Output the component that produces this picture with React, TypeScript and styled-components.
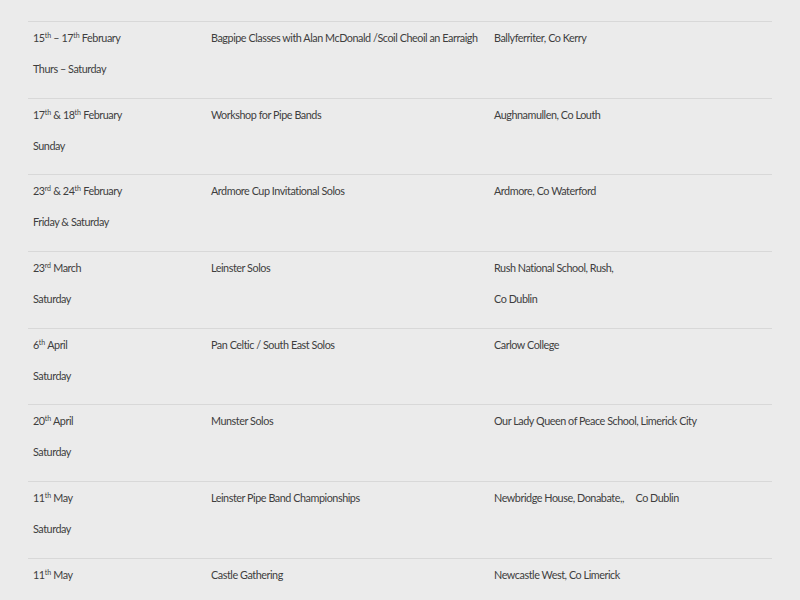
import React from "react";
import styled, { createGlobalStyle } from "styled-components";

type Event = {
  day: React.ReactNode;
  when: string;
  title: string;
  place: string[];
};

const events: Event[] = [
  {
    day: (
      <>
        15<sup>th</sup> – 17<sup>th</sup> February
      </>
    ),
    when: "Thurs – Saturday",
    title: "Bagpipe Classes with Alan McDonald /Scoil Cheoil an Earraigh",
    place: ["Ballyferriter, Co Kerry"],
  },
  {
    day: (
      <>
        17<sup>th</sup> &amp; 18<sup>th</sup> February
      </>
    ),
    when: "Sunday",
    title: "Workshop for Pipe Bands",
    place: ["Aughnamullen, Co Louth"],
  },
  {
    day: (
      <>
        23<sup>rd</sup> &amp; 24<sup>th</sup> February
      </>
    ),
    when: "Friday & Saturday",
    title: "Ardmore Cup Invitational Solos",
    place: ["Ardmore, Co Waterford"],
  },
  {
    day: (
      <>
        23<sup>rd</sup> March
      </>
    ),
    when: "Saturday",
    title: "Leinster Solos",
    place: ["Rush National School, Rush,", "Co Dublin"],
  },
  {
    day: (
      <>
        6<sup>th</sup> April
      </>
    ),
    when: "Saturday",
    title: "Pan Celtic / South East Solos",
    place: ["Carlow College"],
  },
  {
    day: (
      <>
        20<sup>th</sup> April
      </>
    ),
    when: "Saturday",
    title: "Munster Solos",
    place: ["Our Lady Queen of Peace School, Limerick City"],
  },
  {
    day: (
      <>
        11<sup>th</sup> May
      </>
    ),
    when: "Saturday",
    title: "Leinster Pipe Band Championships",
    place: ["Newbridge House, Donabate,,\u00a0\u00a0\u00a0\u00a0 Co Dublin"],
  },
  {
    day: (
      <>
        11<sup>th</sup> May
      </>
    ),
    when: "Saturday",
    title: "Castle Gathering",
    place: ["Newcastle West, Co Limerick"],
  },
];

const GlobalStyle = createGlobalStyle`
  html, body {
    margin: 0;
    background: #ebebeb;
  }
  body {
    font-family: Lato, "Open Sans", sans-serif;
    color: #3e3e3e;
  }
`;

const App: React.FC = () => {
  return (
    <Page>
      <GlobalStyle />
      <Table>
        <colgroup>
          <col style={{ width: 178 }} />
          <col style={{ width: 283 }} />
          <col style={{ width: 283 }} />
        </colgroup>
        <tbody>
          {events.map((e, i) => (
            <Row key={i}>
              <Cell>
                <Line>{e.day}</Line>
                <Line>{e.when}</Line>
              </Cell>
              <Cell>
                <Line>{e.title}</Line>
              </Cell>
              <Cell>
                {e.place.map((p, j) => (
                  <Line key={j}>{p}</Line>
                ))}
              </Cell>
            </Row>
          ))}
        </tbody>
      </Table>
    </Page>
  );
};

const Page = styled.main`
  padding: 21px 28px 0;
  height: 600px;
  box-sizing: border-box;
  overflow: hidden;
`;

const Table = styled.table`
  width: 744px;
  border-collapse: collapse;
  table-layout: fixed;
`;

const Row = styled.tr`
  border-top: 1px solid #d8d8d8;
`;

const Cell = styled.td`
  vertical-align: top;
  padding: 6px 5px 7.7px;
  font-size: 10.8px;
  letter-spacing: -0.45px;
`;

const Line = styled.p`
  margin: 0 0 11px;
  line-height: 20px;
  white-space: nowrap;

  sup {
    font-size: 7px;
    line-height: 0;
    letter-spacing: 0;
    vertical-align: 4px;
  }
`;

export default App;
